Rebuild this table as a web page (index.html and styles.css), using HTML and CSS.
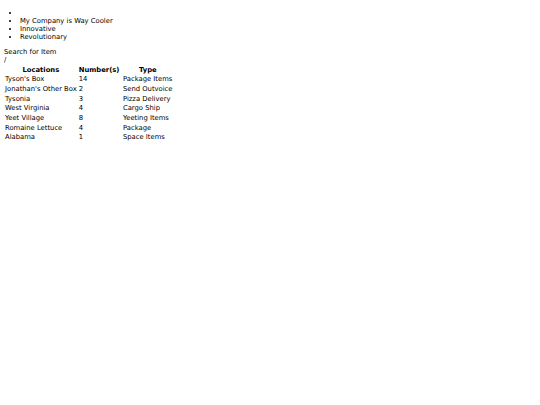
FILE: index.html
```html
<!DOCTYPE html>
<html>
<head>
<meta charset="utf-8">
<link rel="stylesheet" href="styles.css">
</head>
<body>
<ul class="nav">
  <li></li>
  <li>My Company is Way Cooler</li>
  <li>Innovative</li>
  <li>Revolutionary</li>
</ul>
<div class="search">Search for Item</div>
<div class="slash">/</div>
<table class="items">
  <thead>
    <tr><th>Locations</th><th class="num">Number(s)</th><th>Type</th></tr>
  </thead>
  <tbody>
    <tr><td>Tyson's Box</td><td class="num">14</td><td>Package Items</td></tr>
    <tr><td>Jonathan's Other Box</td><td class="num">2</td><td>Send Outvoice</td></tr>
    <tr><td>Tysonia</td><td class="num">3</td><td>Pizza Delivery</td></tr>
    <tr><td>West Virginia</td><td class="num">4</td><td>Cargo Ship</td></tr>
    <tr><td>Yeet Village</td><td class="num">8</td><td>Yeeting Items</td></tr>
    <tr><td>Romaine Lettuce</td><td class="num">4</td><td>Package</td></tr>
    <tr><td>Alabama</td><td class="num">1</td><td>Space Items</td></tr>
  </tbody>
</table>
</body>
</html>
```
FILE: styles.css
```css
html { background: #fff; }
body {
  margin: 4px;
  font-family: "DejaVu Sans", sans-serif;
  font-size: 6.8px;
  line-height: 8px;
  color: #000;
  -webkit-font-smoothing: antialiased;
}
.nav {
  margin: 5px 0 7px;
  padding-left: 16px;
}
.search, .slash { line-height: 8px; }
.items {
  border-spacing: 1px;
  margin-top: 1px;
}
.items th, .items td {
  padding: 0.5px 1px 0.5px 0;
  text-align: left;
  line-height: 7.7px;
}
.items .num { padding-right: 2.5px; }
.items th { text-align: center; }
```
